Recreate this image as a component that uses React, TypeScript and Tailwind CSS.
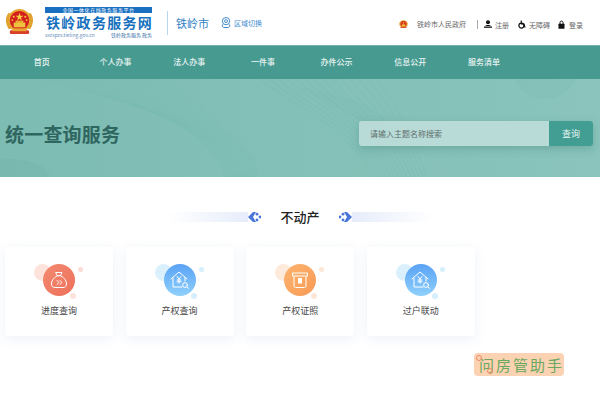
import React from "react";

const font = { fontFamily: '"Noto Sans CJK SC", "Liberation Sans", sans-serif' };

function Emblem({ size }: { size: number }) {
  return (
    <svg width={size} height={size} viewBox="0 1 30 28" className="shrink-0">
      <path d="M4 22 C0 16 0 9 4 5 L7 7 C4 12 4 17 7 21 Z" fill="#e0a030" />
      <path d="M26 22 C30 16 30 9 26 5 L23 7 C26 12 26 17 23 21 Z" fill="#e0a030" />
      <circle cx="15" cy="13" r="12" fill="#e6a62f" />
      <circle cx="15" cy="13" r="10" fill="#d3201f" />
      <polygon points="15,5 16,8 19,8 16.5,10 17.5,13 15,11 12.5,13 13.5,10 11,8 14,8" fill="#f5d040" />
      <circle cx="9" cy="9" r="1" fill="#f5d040" />
      <circle cx="21" cy="9" r="1" fill="#f5d040" />
      <circle cx="7.5" cy="12.5" r="0.9" fill="#f5d040" />
      <circle cx="22.5" cy="12.5" r="0.9" fill="#f5d040" />
      <rect x="9" y="15" width="12" height="5" fill="#f0c040" />
      <rect x="11" y="13" width="8" height="2.5" fill="#e8b030" />
      <rect x="5" y="23" width="20" height="4" rx="1.5" fill="#d8402a" />
      <rect x="8" y="21" width="14" height="3" fill="#e6a62f" />
    </svg>
  );
}

function BannerLines() {
  const a: React.ReactNode[] = [];
  for (let i = 0; i < 40; i++) {
    a.push(
      <path
        key={"a" + i}
        d={`M${40 + i * 3.2} 0 C ${130 + i * 3} ${25 + i}, ${205 + i * 1.5} ${40 + i}, ${225 + i * 0.8} 98`}
        fill="none"
        stroke="#5aa79d"
        strokeOpacity="0.1"
        strokeWidth="0.5"
      />
    );
  }
  for (let i = 0; i < 14; i++) {
    a.push(
      <path
        key={"b" + i}
        d={`M${260 + i * 9} 0 C ${290 + i * 8} 25, ${340 + i * 5} 40, ${375 + i * 4} 98`}
        fill="none"
        stroke="#5aa79d"
        strokeOpacity="0.25"
        strokeWidth="0.5"
      />
    );
  }
  for (let i = 0; i < 7; i++) {
    a.push(
      <path
        key={"c" + i}
        d={`M${300 + i * 8} ${i * 2 + 8} C ${340 + i * 6} 30, ${365 + i * 4} 45, 400 ${55 + i}`}
        fill="none"
        stroke="#5aa79d"
        strokeOpacity="0.25"
        strokeWidth="0.5"
      />
    );
  }
  return (
    <svg viewBox="0 0 600 98" width="600" height="98" className="absolute inset-0">
      <circle cx="545" cy="-14" r="34" fill="#7fbab2" fillOpacity="0.3" />
      <circle cx="400" cy="110" r="50" fill="#93c9c1" fillOpacity="0.12" />
      <ellipse cx="10" cy="100" rx="40" ry="20" fill="#72b3aa" fillOpacity="0.35" />
      {a}
    </svg>
  );
}

function MoneyIcon() {
  return (
    <svg width="18" height="18" viewBox="0 0 18 18" fill="none" stroke="#fff" strokeWidth="1" strokeLinejoin="round" strokeLinecap="round">
      <path d="M6 1.5 L12 1.5 L10.5 4.5 L7.5 4.5 Z" />
      <path d="M7 5 C3 7 1.5 10.5 1.5 13 C1.5 15.5 3 16.5 5 16.5 L13 16.5 C15 16.5 16.5 15.5 16.5 13 C16.5 10.5 15 7 11 5 Z" />
      <path d="M7 9.5 L9 11.5 L7 13.5 M10 9.5 L12 11.5 L10 13.5" />
    </svg>
  );
}

function HouseIcon() {
  return (
    <svg width="20" height="18" viewBox="0 0 20 18" fill="none" stroke="#fff" strokeWidth="1" strokeLinejoin="round" strokeLinecap="round">
      <path d="M1 8 L9 1 L17 8" />
      <path d="M3 7 L3 16 L12 16" />
      <path d="M15 6.5 L15 10" />
      <path d="M7 5.5 L9 8 L11 5.5 M9 8 L9 12 M7 9 L11 9 M7 10.8 L11 10.8" />
      <circle cx="15" cy="14" r="2.4" />
      <path d="M17 16 L18.5 17.3" />
    </svg>
  );
}

function CertIcon() {
  return (
    <svg width="18" height="18" viewBox="0 0 18 18" fill="none" stroke="#fff" strokeWidth="1" strokeLinejoin="round">
      <path d="M1.5 2 L16.5 2 L16.5 5 L1.5 5 Z" />
      <path d="M3 5 L3 15 C3 16 3.5 16.5 4.5 16.5 L13.5 16.5 C14.5 16.5 15 16 15 15 L15 5" />
      <rect x="7" y="7" width="4" height="5.5" fill="#fff" stroke="none" />
    </svg>
  );
}

type CardProps = {
  label: string;
  main: string;
  big: string;
  small1: string;
  small2: string;
  icon: React.ReactNode;
};

function Card({ label, main, big, small1, small2, icon }: CardProps) {
  return (
    <div className="w-[108px] h-[89px] bg-white rounded-[3px] shadow-[0_3px_12px_rgba(90,115,190,0.1)] flex flex-col items-center pt-[17px]">
      <div className="relative w-[32px] h-[32px]">
        <span className={`absolute left-[-9px] top-0 w-[17px] h-[17px] rounded-full ${big}`} />
        <span className={`absolute left-[35px] top-[3px] w-[5px] h-[5px] rounded-full ${small1}`} />
        <span className={`absolute left-[27px] top-[29px] w-[6px] h-[6px] rounded-full ${small2}`} />
        <span className={`absolute inset-0 rounded-full flex items-center justify-center ${main}`}>{icon}</span>
      </div>
      <span className="mt-[8px] text-[9px] leading-[14px] text-[#444]">{label}</span>
    </div>
  );
}

function App() {
  const nav = ["首页", "个人办事", "法人办事", "一件事", "办件公示", "信息公开", "服务清单"];
  return (
    <div className="w-[600px] h-[400px] overflow-hidden bg-white flex flex-col relative" style={font}>
      <header className="h-[45px] shrink-0 flex items-center">
        <div className="ml-[5px] mr-[11px] mt-[-1px]">
          <Emblem size={29} />
        </div>
        <div className="w-[107px] flex flex-col mt-[-1px]">
          <div className="h-[6px] bg-[#1a6fc0] text-white text-[5px] leading-[6px] text-center tracking-[0.55px] whitespace-nowrap overflow-hidden">
            全国一体化在线政务服务平台
          </div>
          <div className="text-[14px] leading-[17px] mt-[1px] pl-[1px] font-bold text-[#1670bd] tracking-[1.3px] whitespace-nowrap">
            铁岭政务服务网
          </div>
          <div className="mt-[1px] flex justify-between text-[5px] leading-[6px] text-[#5f8db8] whitespace-nowrap">
            <span>sxzspzx.tieling.gov.cn</span>
            <span className="text-[#356fa8]">铁岭政务服务 政务</span>
          </div>
        </div>
        <div className="ml-[15px] w-px h-[24px] bg-[#b6d5f0]" />
        <span className="ml-[8px] text-[11px] leading-[16px] text-[#2f7fc4]">铁岭市</span>
        <svg width="10" height="13" viewBox="0 0 11 13" fill="none" stroke="#2f7fc4" strokeWidth="1" className="ml-[12px]">
          <circle cx="5.5" cy="5" r="4" />
          <circle cx="5.5" cy="5" r="1.6" />
          <path d="M2 8.5 C1 9.5 1 11.5 3 12 L8 12 C10 11.5 10 9.5 9 8.5" />
        </svg>
        <span className="ml-[3px] text-[7px] leading-[10px] text-[#3d8bd0]">区域切换</span>
        <div className="ml-auto mr-[17px] mt-[3px] flex items-center text-[7px] leading-[10px] text-[#666]">
          <Emblem size={9} />
          <span className="ml-[9px]">铁岭市人民政府</span>
          <span className="ml-[11px] w-px h-[9px] bg-[#aaa]" />
          <svg width="8" height="8" viewBox="0 0 8 8" fill="#111" className="ml-[6px]">
            <circle cx="4" cy="2.2" r="2" />
            <path d="M1 6 C1.5 4.5 6.5 4.5 7 6 Z" />
            <rect x="0" y="6.5" width="8" height="1.3" />
          </svg>
          <span className="ml-[3px] mt-[1px]">注册</span>
          <svg width="8" height="9" viewBox="0 0 8 9" fill="none" stroke="#111" strokeWidth="1.2" className="ml-[9px]">
            <circle cx="3.4" cy="5.6" r="2.5" />
            <path d="M3.2 0.5 L3.4 4 L6 4 L7 7.5" />
          </svg>
          <span className="ml-[3px] mt-[1px]">无障碍</span>
          <svg width="7" height="9" viewBox="0 0 7 9" fill="#111" className="ml-[8px]">
            <path d="M2 4 L2 2.4 C2 0.6 5 0.6 5 2.4 L5 4" fill="none" stroke="#111" strokeWidth="1" />
            <rect x="0.5" y="3.8" width="6" height="5" rx="0.5" />
          </svg>
          <span className="ml-[4px] mt-[1px]">登录</span>
        </div>
      </header>

      <nav className="h-[34px] shrink-0 bg-[#469a90] border-t border-[#6fb3aa] pl-[5px] pb-[2px] flex items-center text-[8px] font-medium text-[#e8f4f2]">
        {nav.map((n) => (
          <span key={n} className="w-[73.7px] text-center">
            {n}
          </span>
        ))}
      </nav>

      <section className="h-[98px] shrink-0 relative overflow-hidden bg-gradient-to-r from-[#7dbcb3] to-[#8ac4bc]">
        <BannerLines />
        <div className="relative h-full flex items-center justify-between pl-[5px] pr-[7px] pt-[11px]">
          <h1 className="text-[19px] leading-[24px] font-bold text-[#2f6660] tracking-[0.2px]">统一查询服务</h1>
          <div className="w-[234px] h-[25px] flex rounded-[3px] shadow-[0_3px_8px_rgba(50,120,110,0.3)] overflow-hidden">
            <div className="w-[190px] bg-[#b9dbd7] pl-[11px] flex items-center text-[8px] text-[#5f6f6d]">
              请输入主题名称搜索
            </div>
            <div className="flex-1 bg-[#429d92] flex items-center justify-center text-[9px] text-[#e6f4f2]">查询</div>
          </div>
        </div>
      </section>

      <div className="mt-[32px] h-[16px] shrink-0 flex items-center justify-center">
        <span className="w-[80px] h-[10px] bg-gradient-to-r from-white to-[#e6ecfa]" />
        <svg width="13" height="10" viewBox="0 0 13 10" fill="#4a76d8">
          <path d="M5 0 L8 0 L5 5 L8 10 L5 10 L0 5 Z" />
          <circle cx="9" cy="2.2" r="1.4" />
          <circle cx="9" cy="8" r="1.4" />
          <circle cx="12" cy="5" r="1.4" />
        </svg>
        <span className="w-[78px] text-center text-[13px] leading-[16px] font-medium text-[#222]">不动产</span>
        <svg width="13" height="10" viewBox="0 0 13 10" fill="#4a76d8">
          <path d="M8 0 L5 0 L8 5 L5 10 L8 10 L13 5 Z" />
          <circle cx="4" cy="2.2" r="1.4" />
          <circle cx="4" cy="8" r="1.4" />
          <circle cx="1" cy="5" r="1.4" />
        </svg>
        <span className="w-[80px] h-[10px] bg-gradient-to-l from-white to-[#e6ecfa]" />
      </div>

      <div className="mt-[22px] ml-[5px] flex gap-[12.6px]">
        <Card
          label="进度查询"
          main="bg-gradient-to-br from-[#f28a70] to-[#ee6f5a]"
          big="bg-[#fde3dc]"
          small1="bg-[#fcdcd4]"
          small2="bg-[#fde3dc]"
          icon={<MoneyIcon />}
        />
        <Card
          label="产权查询"
          main="bg-gradient-to-b from-[#5aa2f5] to-[#8fd0fb]"
          big="bg-[#dbf0fd]"
          small1="bg-[#d5effd]"
          small2="bg-[#d5effd]"
          icon={<HouseIcon />}
        />
        <Card
          label="产权证照"
          main="bg-gradient-to-br from-[#fdb46e] to-[#f79a55]"
          big="bg-[#fdeadb]"
          small1="bg-[#fde6d6]"
          small2="bg-[#fde6d6]"
          icon={<CertIcon />}
        />
        <Card
          label="过户联动"
          main="bg-gradient-to-b from-[#5aa2f5] to-[#8fd0fb]"
          big="bg-[#dbf0fd]"
          small1="bg-[#d5effd]"
          small2="bg-[#d5effd]"
          icon={<HouseIcon />}
        />
      </div>

      <div className="absolute left-[474px] top-[353px] w-[90px] h-[23px] rounded-[4px] bg-[#fbd3b2] flex items-center whitespace-nowrap text-[15px] leading-[20px] text-[#6aa860] pl-[5px] tracking-[2px]">
        <span className="relative">
          问
          <span className="absolute left-[-3px] top-[0px] w-[6px] h-[6px] rounded-full border-[1.5px] border-[#ef8a68]" />
          <span className="absolute left-[8px] top-[13px] w-[6px] h-[6px] rounded-full border-[1.5px] border-[#ef8a68]" />
        </span>
        房管助手
      </div>
    </div>
  );
}

export default App;
